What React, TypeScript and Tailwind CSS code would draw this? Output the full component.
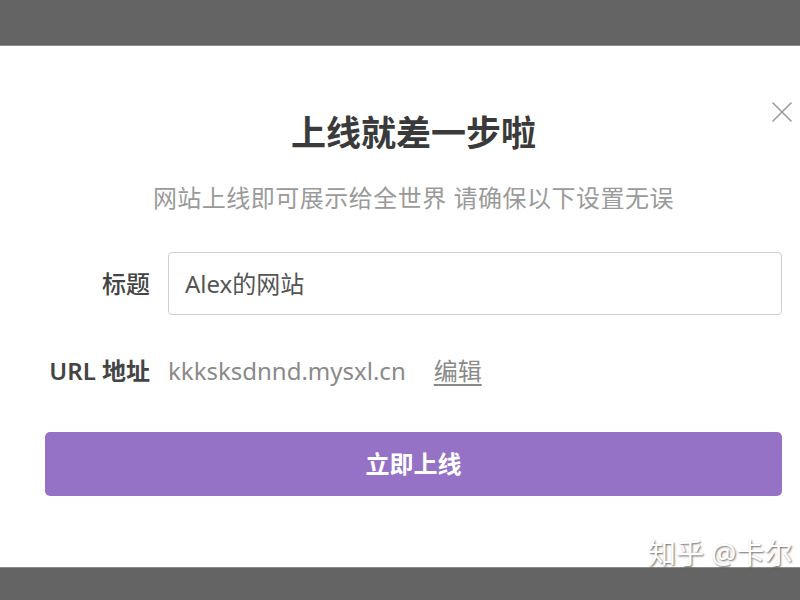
import React from "react";

export default function App() {
  const cjk = { fontFamily: '"Noto Sans", "Noto Sans CJK SC", sans-serif' };
  return (
    <div className="relative w-[800px] h-[600px] overflow-hidden flex flex-col bg-white" style={cjk}>
      <div className="h-[46px] bg-[#646464] border-b border-[#8a8a8a]" />
      <div className="relative flex-1 flex flex-col bg-white px-[18px] pl-[45px]">
        <button className="absolute right-[6px] top-[54px] w-[24px] h-[24px] flex items-center justify-center">
          <svg width="22" height="22" viewBox="0 0 22 22" fill="none" stroke="#9a9a9a" strokeWidth="1.6" strokeLinecap="round">
            <line x1="2" y1="2" x2="20" y2="20" />
            <line x1="20" y1="2" x2="2" y2="20" />
          </svg>
        </button>
        <h1 className="mt-[67px] text-center text-[35px] leading-[40px] font-bold text-[#3a3a3a]">上线就差一步啦</h1>
        <p className="mt-[30px] text-center text-[24px] leading-[30px] text-[#9a9a9a] tracking-[0.5px]">网站上线即可展示给全世界 请确保以下设置无误</p>
        <div className="mt-[39px] flex items-center gap-[18px]">
          <div className="w-[105px] text-right text-[24px] font-medium text-[#444]">标题</div>
          <div className="flex-1 h-[63px] border border-[#cfcfcf] rounded-[4px] flex items-center px-[16px] text-[24px] text-[#555]">
            Alex的网站
          </div>
        </div>
        <div className="mt-[41px] flex items-center gap-[18px] h-[30px]">
          <div className="w-[105px] text-right text-[24px] font-semibold text-[#444] whitespace-nowrap">URL 地址</div>
          <div className="flex items-center gap-[28px] text-[24px] text-[#8a8a8a]">
            <span>kkksksdnnd.mysxl.cn</span>
            <span className="underline underline-offset-4">编辑</span>
          </div>
        </div>
        <button className="mt-[46px] h-[64px] w-full rounded-[5px] bg-[#9572c5] text-white text-[24px] font-bold">
          立即上线
        </button>
      </div>
      <div className="h-[33px] bg-[#646464] border-t border-[#8a8a8a]" />
      <div
        className="absolute left-[648px] top-[536px] text-[28px] leading-[34px] text-white whitespace-nowrap"
        style={{ textShadow: "1px 1px 2px rgba(0,0,0,0.6)" }}
      >
        知乎 @卡尔
      </div>
    </div>
  );
}
